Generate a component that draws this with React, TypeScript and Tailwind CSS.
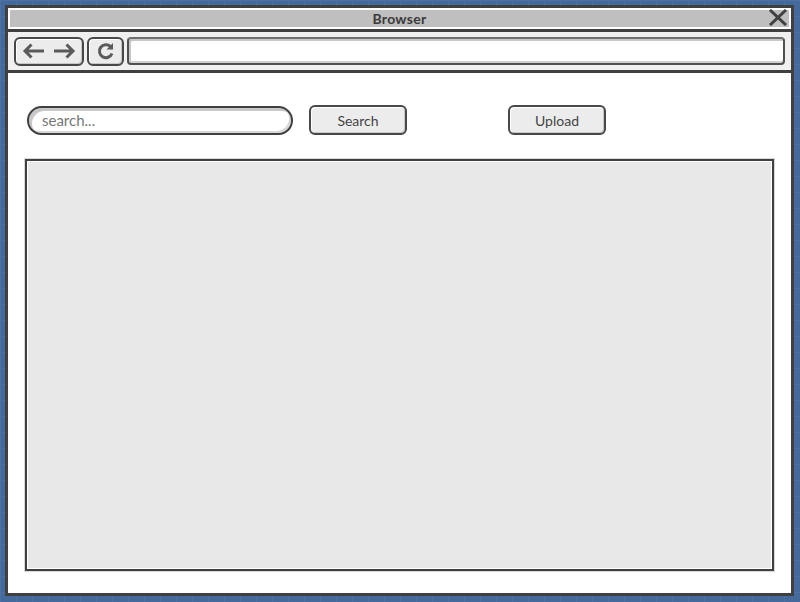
export default function App() {
  const font = "font-['Lato','Noto_Sans',sans-serif]";
  return (
    <div className={`w-[800px] h-[602px] p-[5px] bg-[#44699b] bg-[linear-gradient(#4c71a2_1px,transparent_1px),linear-gradient(90deg,#4c71a2_1px,transparent_1px)] bg-[size:16px_16px] ${font}`}>
      <div className="w-[789px] h-[591px] border-[3px] border-[#404040] bg-white flex flex-col">
        {/* title bar */}
        <div className="h-[21px] shrink-0 pt-[2px] px-[2px] pb-[2px]">
          <div className="relative h-[17px] bg-[#bfbfbf] flex items-center justify-center text-[14px] font-bold tracking-[0.3px] text-[#3a3a3a]">
            Browser
            <svg className="absolute right-[1px] top-[-1px]" width="20" height="17" viewBox="0 0 20 17">
              <path d="M2 1 L18 16 M18 1 L2 16" stroke="#404040" strokeWidth="3" fill="none" />
            </svg>
          </div>
        </div>
        {/* toolbar */}
        <div className="h-[44px] shrink-0 border-y-[3px] border-[#404040] bg-[#f0f0f0] flex items-center gap-[3px] pl-[6px] pr-[6px]">
          <div className="w-[70px] h-[29px] rounded-[6px] border-2 border-[#484848] bg-[#ececec] shadow-[inset_1px_1px_0_#fff,inset_-1px_-1px_0_#c8c8c8] flex items-center justify-between px-[6px]">
            <svg width="24" height="18" viewBox="0 0 24 18">
              <path d="M22 9 H3 M9.5 2.5 L3 9 L9.5 15.5" stroke="#5a5a5a" strokeWidth="3" fill="none" />
            </svg>
            <svg width="24" height="18" viewBox="0 0 24 18">
              <path d="M2 9 H21 M14.5 2.5 L21 9 L14.5 15.5" stroke="#5a5a5a" strokeWidth="3" fill="none" />
            </svg>
          </div>
          <div className="w-[37px] h-[29px] rounded-[6px] border-2 border-[#484848] bg-[#ececec] shadow-[inset_1px_1px_0_#fff,inset_-1px_-1px_0_#c8c8c8] flex items-center justify-center">
            <svg width="18" height="18" viewBox="0 0 18 18">
              <path d="M13.5 4.5 A6.5 6.5 0 1 0 15 11.5" stroke="#5a5a5a" strokeWidth="3" fill="none" />
              <path d="M9.5 7.5 H16 V1 Z" fill="#5a5a5a" />
            </svg>
          </div>
          <div className="flex-1 h-[28px] rounded-[4px] border-2 border-[#505050] border-t-[#707070] bg-white shadow-[inset_2px_2px_0_#c8c8c8,inset_0_-2px_0_#d0d0d0]" />
        </div>
        {/* content */}
        <div className="flex-1 flex flex-col pl-[17px] pr-[17px] pt-[32px] pb-[22px]">
          <div className="h-[30px] shrink-0 flex items-center pl-[2px] text-[14px] text-[#444444]">
            <div className="w-[266px] h-[29px] rounded-full border-2 border-[#404040] bg-white shadow-[inset_3px_3px_0_#c8c8c8,inset_-2px_-2px_0_#d8d8d8] flex items-center pl-[13px] text-[15px] text-[#777777]">
              search...
            </div>
            <button className="ml-[16px] w-[98px] h-[30px] rounded-[6px] border-2 border-[#484848] bg-[#ececec] shadow-[inset_1px_1px_0_#fff,inset_-1px_-1px_0_#c8c8c8] flex items-center justify-center">
              Search
            </button>
            <button className="ml-[101px] w-[98px] h-[30px] rounded-[6px] border-2 border-[#484848] bg-[#ececec] shadow-[inset_1px_1px_0_#fff,inset_-1px_-1px_0_#c8c8c8] flex items-center justify-center">
              Upload
            </button>
          </div>
          <div className="mt-[24px] flex-1 border-2 border-[#404040] bg-[#e8e8e8] shadow-[inset_1px_1px_0_#fff,inset_-1px_-1px_0_#fff,0_0_0_1px_#d8d8d8]" />
        </div>
      </div>
    </div>
  );
}
